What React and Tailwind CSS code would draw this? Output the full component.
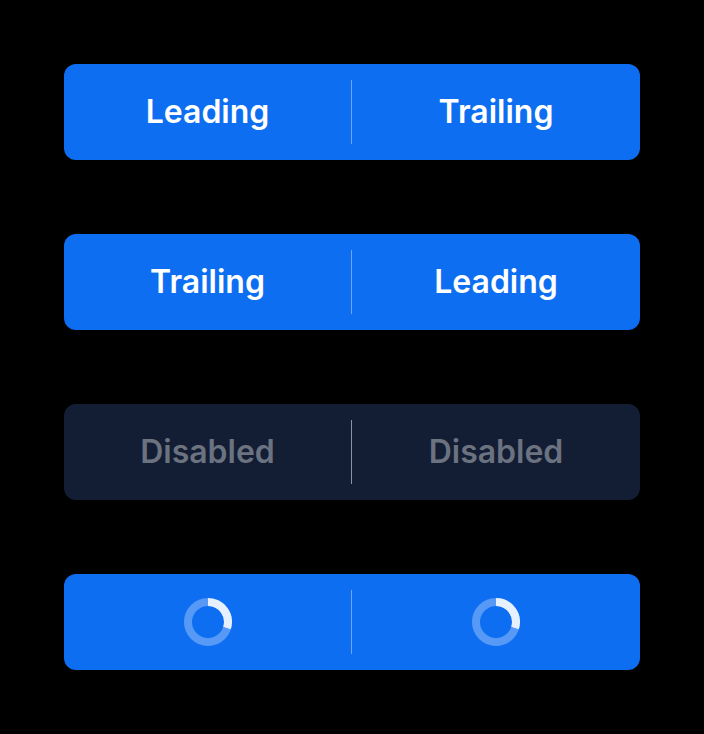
import React from 'react';

const Spinner = () => (
  <svg width="48" height="48" viewBox="0 0 48 48">
    <circle cx="24" cy="24" r="20" fill="none" stroke="rgba(255,255,255,0.3)" strokeWidth="8" />
    <path d="M24 4 A20 20 0 0 1 43 30" fill="none" stroke="rgba(255,255,255,0.85)" strokeWidth="8" />
  </svg>
);

const Group = ({ left, right, disabled }) => {
  const text = `flex h-full items-center justify-center text-[32px] font-semibold ${
    disabled ? 'text-[#6b7280]' : 'text-white'
  }`;
  return (
    <div
      className={`flex h-24 w-[576px] items-center rounded-xl ${
        disabled ? 'bg-[#131d33]' : 'bg-[#0d6ef2]'
      }`}
    >
      <div className={`w-[287px] ${text}`}>{left}</div>
      <div className={`h-16 w-px ${disabled ? 'bg-[#8a93a3]' : 'bg-[#6ea6f6]'}`} />
      <div className={`flex-1 ${text}`}>{right}</div>
    </div>
  );
};

export default function App() {
  return (
    <div
      className="flex min-h-[734px] w-[704px] flex-col gap-[74px] bg-black pl-16 pt-16"
      style={{ fontFamily: 'Inter, "Noto Sans", sans-serif' }}
    >
      <Group left="Leading" right="Trailing" />
      <Group left="Trailing" right="Leading" />
      <Group left="Disabled" right="Disabled" disabled />
      <Group left={<Spinner />} right={<Spinner />} />
    </div>
  );
}
